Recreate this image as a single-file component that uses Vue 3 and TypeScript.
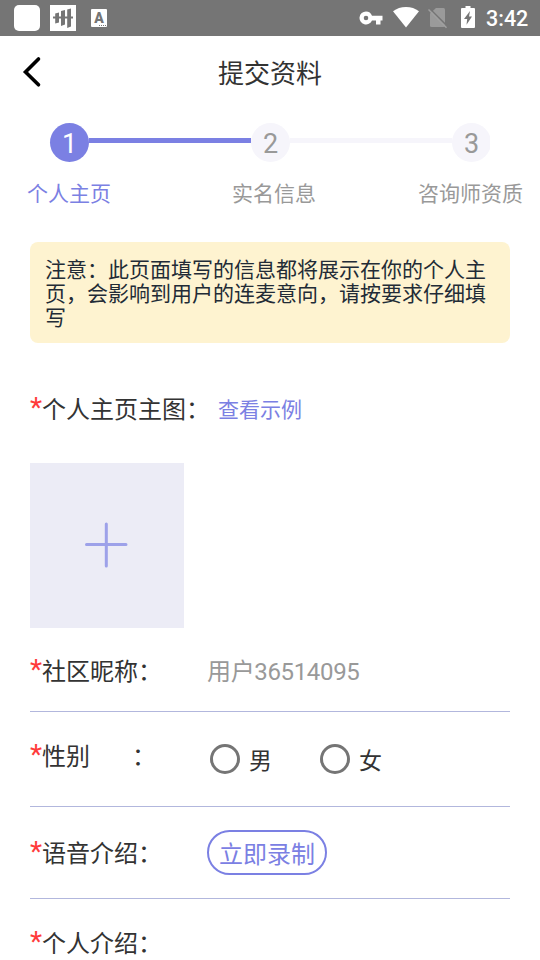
<script setup lang="ts">
import { ref } from 'vue'

interface Step {
  index: number
  label: string
}

const steps: Step[] = [
  { index: 1, label: '个人主页' },
  { index: 2, label: '实名信息' },
  { index: 3, label: '咨询师资质' },
]
const current = ref(1)
const nickname = ref('用户36514095')
const genders: string[] = ['男', '女']
const gender = ref('')
</script>

<template>
  <div class="screen">
    <div class="status">
      <span class="app-block"></span>
      <svg class="audio" width="26" height="26" viewBox="0 0 26 26">
        <rect width="26" height="26" fill="#fff" />
        <path d="M3 12.500H23" stroke="#757575" stroke-width="2" />
        <path d="M5.200 8.500L9 7.500V17.500L5.200 18.500ZM11 6L15 5V19.500L11 21ZM17.200 4.500L21 3.500V21.500L17.200 23Z" fill="#757575" />
      </svg>
      <span class="ime"><span>A</span><i></i></span>
      <span class="spacer"></span>
      <svg class="key" width="24" height="14" viewBox="0 0 24 14">
        <path fill="#fff" fill-rule="evenodd" d="M7 .5A6.500 6.500 0 1 0 13 9.500H17V13.500H21.500V9.500H23.500V4.700H13A6.500 6.500 0 0 0 7 .5ZM7 4.700A2.300 2.300 0 1 1 7 9.300A2.300 2.300 0 0 1 7 4.700Z" />
      </svg>
      <svg class="wifi" width="26" height="21" viewBox="0 0 26 21">
        <path fill="#fff" d="M13 20.500L0 4.300Q5.500 0 13 0T26 4.300Z" />
      </svg>
      <svg class="sim" width="20" height="22" viewBox="0 0 20 22">
        <path fill="#9a9a9a" d="M8 1H15.500Q17 1 17 2.500V18.500Q17 20 15.500 20H3.500Q2 20 2 18.500V6.500Z" />
        <path d="M1.500 1.500L20 20" stroke="#757575" stroke-width="1.600" />
        <path d="M.5 2.500L18.500 20.800" stroke="#a0a0a0" stroke-width="1.500" />
      </svg>
      <svg class="battery" width="14" height="22" viewBox="0 0 14 22">
        <path fill="#fff" d="M4.500 0H9.500V2H13Q14 2 14 3V21Q14 22 13 22H1Q0 22 0 21V3Q0 2 1 2H4.500Z" />
        <path fill="#757575" d="M9 5L3 13H6.200L5.500 18.800L11 10.500H8Z" />
      </svg>
      <span class="clock">3:42</span>
    </div>

    <header class="bar">
      <svg class="back" width="20" height="32" viewBox="0 0 20 32">
        <path d="M16.500 3L3.500 16L16.500 28.800" fill="none" stroke="#000" stroke-width="3.600" stroke-linecap="round" />
      </svg>
      <h1>提交资料</h1>
    </header>

    <div class="track">
      <template v-for="s in steps" :key="s.index">
        <span v-if="s.index > 1" class="link" :class="{ done: s.index - 1 <= current }"></span>
        <span class="dot" :class="{ active: s.index === current }">{{ s.index }}</span>
      </template>
    </div>
    <div class="labels">
      <span v-for="s in steps" :key="s.index" :class="{ active: s.index === current }">{{ s.label }}</span>
    </div>

    <p class="notice">注意：此页面填写的信息都将展示在你的个人主页，会影响到用户的连麦意向，请按要求仔细填写</p>

    <div class="photo-title">
      <span class="label"><b>*</b>个人主页主图：</span>
      <a>查看示例</a>
    </div>
    <div class="upload">
      <svg width="44" height="46" viewBox="0 0 44 46">
        <path d="M2.500 22.500H42M22.300 2V44" stroke="#9da1e9" stroke-width="3" stroke-linecap="round" />
      </svg>
    </div>

    <div class="row nick">
      <span class="label"><b>*</b>社区昵称：</span>
      <span class="value">{{ nickname }}</span>
    </div>
    <div class="row sex">
      <span class="label"><b>*</b>性别<span class="colon">：</span></span>
      <span v-for="g in genders" :key="g" class="option" @click="gender = g">
        <i :class="{ on: gender === g }"></i><span>{{ g }}</span>
      </span>
    </div>
    <div class="row voice">
      <span class="label"><b>*</b>语音介绍：</span>
      <button>立即录制</button>
    </div>
    <div class="row intro">
      <span class="label"><b>*</b>个人介绍：</span>
    </div>
  </div>
</template>

<style>
body {
  margin: 0;
  background: #fff;
}
</style>

<style scoped>
.screen {
  box-sizing: border-box;
  width: 540px;
  height: 960px;
  overflow: hidden;
  background: #fff;
  color: #333;
  font-family: Roboto, 'Noto Sans CJK SC', sans-serif;
}
.status {
  display: flex;
  align-items: flex-start;
  box-sizing: border-box;
  height: 36px;
  padding: 5px 12px 0 14px;
  background: #757575;
}
.app-block {
  width: 26px;
  height: 26px;
  border-radius: 5px;
  background: #fff;
}
.audio { margin-left: 10px; }
.ime {
  display: flex;
  flex-direction: column;
  align-items: center;
  width: 16px;
  height: 18px;
  margin: 4px 0 0 15px;
  border-radius: 1px;
  background: #fff;
  color: #757575;
  font-size: 14px;
  font-weight: 900;
  line-height: 18px;
}
.ime i {
  align-self: flex-end;
  width: 7px;
  margin: -2px 1px 0 0;
  border-top: 1px dotted #757575;
}
.spacer { flex: 1; }
.key { margin: 6px 10px 0 0; }
.wifi { margin: 2px 9px 0 0; }
.sim { margin: 2px 13px 0 0; }
.battery { margin: 1px 11px 0 0; }
.clock {
  width: 42px;
  color: #fff;
  font-size: 21.500px;
  font-weight: 500;
  line-height: 28px;
}
.bar {
  display: grid;
  grid-template-columns: 60px 1fr 60px;
  align-items: center;
  height: 72px;
}
.back { margin-left: 22px; }
h1 {
  margin: 0;
  padding-top: 3px;
  font-size: 26px;
  font-weight: 400;
  line-height: 36px;
  text-align: center;
}
.track {
  display: flex;
  align-items: center;
  margin-top: 15px;
  padding: 0 49px 0 50px;
}
.dot {
  width: 39px;
  height: 39px;
  border-radius: 50%;
  background: #f6f5fb;
  color: #999;
  font-size: 27px;
  line-height: 43px;
  text-align: center;
}
.dot:last-child { clip-path: inset(0 1px 0 0); }
.dot.active {
  background: #7b80e3;
  color: #fff;
}
.link {
  flex: 1;
  height: 5px;
  margin-top: -4px;
  background: #f6f5fb;
}
.link.done { background: #7b80e3; }
.labels {
  display: flex;
  margin-top: 17px;
  padding-left: 27px;
  color: #999;
  font-size: 21px;
  line-height: 30px;
}
.labels span:nth-child(2) { margin-left: 121px; }
.labels span:nth-child(3) { margin-left: 102px; }
.labels .active { color: #7b80e3; }
.notice {
  box-sizing: border-box;
  width: 480px;
  height: 101px;
  margin: 33px 30px 0;
  padding: 16px 15px 13px;
  border-radius: 8px;
  background: #fef3d0;
  color: #222b36;
  font-size: 21px;
  line-height: 24px;
}
.label {
  font-size: 24px;
  line-height: 34px;
  white-space: nowrap;
}
.label b {
  position: relative;
  top: -1px;
  display: inline-block;
  width: 12px;
  color: #ff3b3b;
  font-size: 28px;
  font-weight: 400;
  line-height: 24px;
}
.photo-title {
  display: flex;
  align-items: center;
  margin: 50px 30px 0;
}
.photo-title .label { width: 188px; }
.photo-title a {
  color: #7b80e3;
  font-size: 21px;
  line-height: 34px;
}
.upload {
  display: flex;
  align-items: center;
  justify-content: center;
  box-sizing: border-box;
  width: 154px;
  height: 165px;
  margin: 36px 30px 0;
  padding: 0 2px 1px 0;
  background: #ececf6;
}
.row {
  display: flex;
  align-items: center;
  box-sizing: border-box;
  margin: 0 30px;
  border-bottom: 1px solid #b2b7dd;
}
.row .label { width: 177px; }
.nick { height: 84px; padding-top: 5px; }
.value {
  color: #999;
  font-size: 24px;
  letter-spacing: -.35px;
  line-height: 34px;
}
.sex { height: 95px; }
.sex .label { margin-top: -5px; }
.colon { margin-left: 42px; }
.option {
  display: flex;
  align-items: center;
  width: 107px;
  padding-left: 3px;
  font-size: 23px;
  line-height: 34px;
}
.option span { padding-top: 5px; }
.option i {
  box-sizing: border-box;
  width: 30px;
  height: 30px;
  margin-right: 9px;
  border: 3px solid #757575;
  border-radius: 50%;
}
.option i.on { background: radial-gradient(#7b80e3 45%, #fff 50%); }
.voice { height: 92px; }
.voice .label { padding-top: 3px; }
button {
  box-sizing: border-box;
  width: 120px;
  height: 45px;
  padding: 0;
  border: 2px solid #7b80e3;
  border-radius: 23px;
  background: #fff;
  color: #7b80e3;
  font: inherit;
  font-size: 24px;
}
.intro {
  height: 90px;
  border: 0;
}
</style>
